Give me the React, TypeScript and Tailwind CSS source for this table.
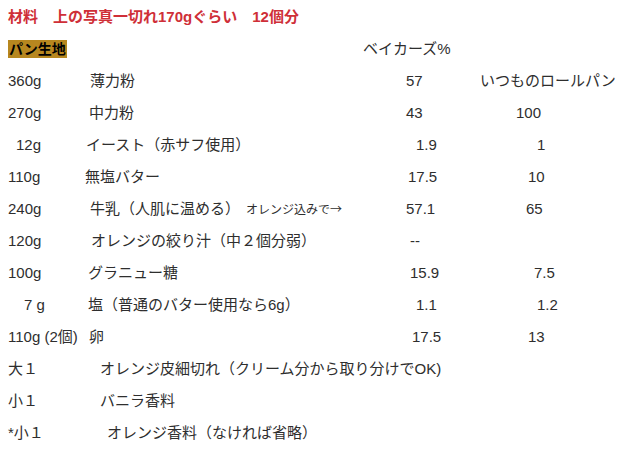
const font = { fontFamily: '"Liberation Sans", "Noto Sans CJK JP", sans-serif' };

type RowProps = {
  a: string;
  aw: string;
  b: React.ReactNode;
  bw?: string;
  c?: string;
  cw?: string;
  d?: string;
};

function Row({ a, aw, b, bw, c, cw, d }: RowProps) {
  return (
    <div className="flex h-8 items-center whitespace-nowrap">
      <span className={`${aw} shrink-0`}>{a}</span>
      <span className={`${bw ?? ""} shrink-0`}>{b}</span>
      {c && <span className={`${cw ?? ""} shrink-0`}>{c}</span>}
      {d && <span className="shrink-0">{d}</span>}
    </div>
  );
}

export default function App() {
  return (
    <div
      className="h-[452px] w-[620px] overflow-hidden bg-white pl-2 pt-px text-[15px] text-[#2e2e2e]"
      style={font}
    >
      <div className="flex h-8 items-center font-bold text-[#cf2f38]">
        材料　上の写真一切れ170gぐらい　12個分
      </div>
      <div className="flex h-8 items-center">
        <span className="w-[355px] shrink-0">
          <span className="bg-[#b7871f] px-px py-[1px] text-[14px] font-bold text-black">
            パン生地
          </span>
        </span>
        <span>ベイカーズ%</span>
      </div>
      <Row a="360g" aw="w-[82px]" b="薄力粉" bw="w-[316px]" c="57" cw="w-[74px]" d="いつものロールパン" />
      <Row a="270g" aw="w-[81px]" b="中力粉" bw="w-[317px]" c="43" cw="w-[110px]" d="100" />
      <Row a="12g" aw="w-[78px] pl-2" b="イースト（赤サフ使用）" bw="w-[330px]" c="1.9" cw="w-[121px]" d="1" />
      <Row a="110g" aw="w-[77px]" b="無塩バター" bw="w-[323px]" c="17.5" cw="w-[120px]" d="10" />
      <Row
        a="240g"
        aw="w-[82px]"
        b={
          <>
            牛乳（人肌に温める）
            <span className="ml-[6px] text-[12px]">
              オレンジ込みで
              <span style={{ fontFamily: '"Noto Sans CJK JP", sans-serif' }}>→</span>
            </span>
          </>
        }
        bw="w-[316px]"
        c="57.1"
        cw="w-[120px]"
        d="65"
      />
      <Row a="120g" aw="w-[83px]" b="オレンジの絞り汁（中２個分弱）" bw="w-[319px]" c="--" />
      <Row a="100g" aw="w-[80px]" b="グラニュー糖" bw="w-[322px]" c="15.9" cw="w-[124px]" d="7.5" />
      <Row a="7 g" aw="w-[80px] pl-4" b="塩（普通のバター使用なら6g）" bw="w-[328px]" c="1.1" cw="w-[121px]" d="1.2" />
      <Row a="110g (2個)" aw="w-[81px]" b="卵" bw="w-[323px]" c="17.5" cw="w-[116px]" d="13" />
      <Row a="大１" aw="w-[92px]" b="オレンジ皮細切れ（クリーム分から取り分けでOK)" />
      <Row a="小１" aw="w-[92px]" b="バニラ香料" />
      <Row a="*小１" aw="w-[99px]" b="オレンジ香料（なければ省略）" />
    </div>
  );
}
